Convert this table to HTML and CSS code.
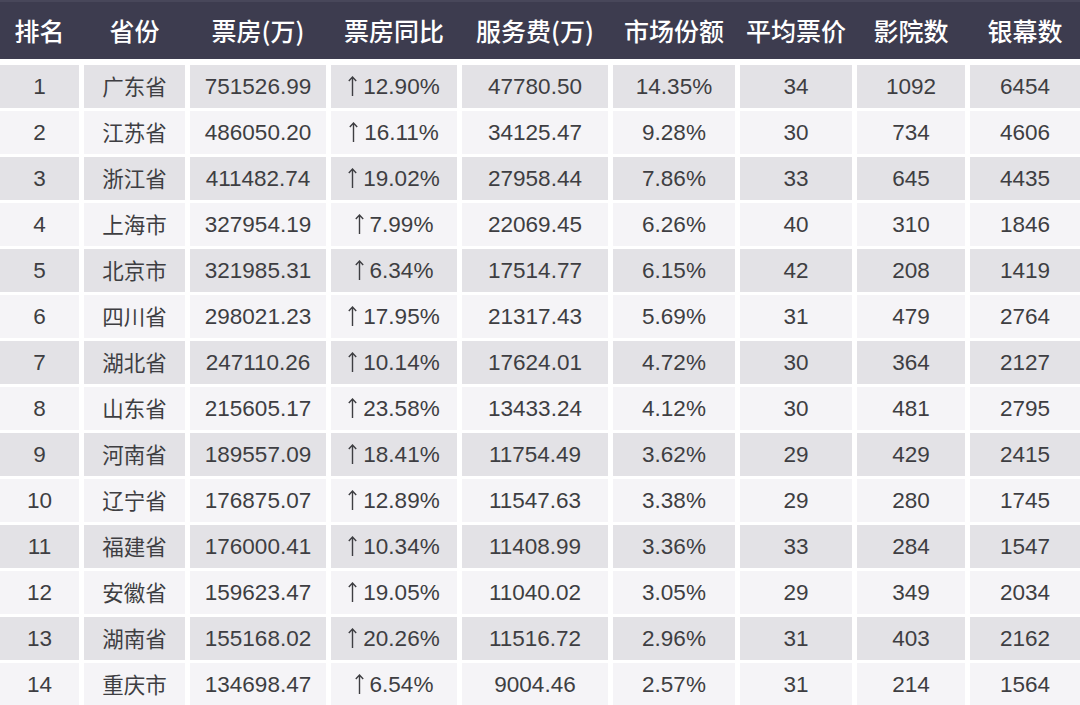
FILE: index.html
```html
<!DOCTYPE html>
<html lang="zh">
<head>
<meta charset="utf-8">
<link rel="stylesheet" href="styles.css">
</head>
<body>
<div class="table">
  <div class="row head">
    <div>排名</div><div>省份</div><div>票房(万)</div><div>票房同比</div><div>服务费(万)</div><div>市场份额</div><div>平均票价</div><div>影院数</div><div>银幕数</div>
  </div>
  <div class="row odd"><div>1</div><div class="prov">广东省</div><div>751526.99</div><div><svg class="up" viewBox="0 0 9 20"><path d="M4.5 1V20M0.8 5L4.5 1L8.2 5"/></svg>12.90%</div><div>47780.50</div><div>14.35%</div><div>34</div><div>1092</div><div>6454</div></div>
  <div class="row even"><div>2</div><div class="prov">江苏省</div><div>486050.20</div><div><svg class="up" viewBox="0 0 9 20"><path d="M4.5 1V20M0.8 5L4.5 1L8.2 5"/></svg>16.11%</div><div>34125.47</div><div>9.28%</div><div>30</div><div>734</div><div>4606</div></div>
  <div class="row odd"><div>3</div><div class="prov">浙江省</div><div>411482.74</div><div><svg class="up" viewBox="0 0 9 20"><path d="M4.5 1V20M0.8 5L4.5 1L8.2 5"/></svg>19.02%</div><div>27958.44</div><div>7.86%</div><div>33</div><div>645</div><div>4435</div></div>
  <div class="row even"><div>4</div><div class="prov">上海市</div><div>327954.19</div><div><svg class="up" viewBox="0 0 9 20"><path d="M4.5 1V20M0.8 5L4.5 1L8.2 5"/></svg>7.99%</div><div>22069.45</div><div>6.26%</div><div>40</div><div>310</div><div>1846</div></div>
  <div class="row odd"><div>5</div><div class="prov">北京市</div><div>321985.31</div><div><svg class="up" viewBox="0 0 9 20"><path d="M4.5 1V20M0.8 5L4.5 1L8.2 5"/></svg>6.34%</div><div>17514.77</div><div>6.15%</div><div>42</div><div>208</div><div>1419</div></div>
  <div class="row even"><div>6</div><div class="prov">四川省</div><div>298021.23</div><div><svg class="up" viewBox="0 0 9 20"><path d="M4.5 1V20M0.8 5L4.5 1L8.2 5"/></svg>17.95%</div><div>21317.43</div><div>5.69%</div><div>31</div><div>479</div><div>2764</div></div>
  <div class="row odd"><div>7</div><div class="prov">湖北省</div><div>247110.26</div><div><svg class="up" viewBox="0 0 9 20"><path d="M4.5 1V20M0.8 5L4.5 1L8.2 5"/></svg>10.14%</div><div>17624.01</div><div>4.72%</div><div>30</div><div>364</div><div>2127</div></div>
  <div class="row even"><div>8</div><div class="prov">山东省</div><div>215605.17</div><div><svg class="up" viewBox="0 0 9 20"><path d="M4.5 1V20M0.8 5L4.5 1L8.2 5"/></svg>23.58%</div><div>13433.24</div><div>4.12%</div><div>30</div><div>481</div><div>2795</div></div>
  <div class="row odd"><div>9</div><div class="prov">河南省</div><div>189557.09</div><div><svg class="up" viewBox="0 0 9 20"><path d="M4.5 1V20M0.8 5L4.5 1L8.2 5"/></svg>18.41%</div><div>11754.49</div><div>3.62%</div><div>29</div><div>429</div><div>2415</div></div>
  <div class="row even"><div>10</div><div class="prov">辽宁省</div><div>176875.07</div><div><svg class="up" viewBox="0 0 9 20"><path d="M4.5 1V20M0.8 5L4.5 1L8.2 5"/></svg>12.89%</div><div>11547.63</div><div>3.38%</div><div>29</div><div>280</div><div>1745</div></div>
  <div class="row odd"><div>11</div><div class="prov">福建省</div><div>176000.41</div><div><svg class="up" viewBox="0 0 9 20"><path d="M4.5 1V20M0.8 5L4.5 1L8.2 5"/></svg>10.34%</div><div>11408.99</div><div>3.36%</div><div>33</div><div>284</div><div>1547</div></div>
  <div class="row even"><div>12</div><div class="prov">安徽省</div><div>159623.47</div><div><svg class="up" viewBox="0 0 9 20"><path d="M4.5 1V20M0.8 5L4.5 1L8.2 5"/></svg>19.05%</div><div>11040.02</div><div>3.05%</div><div>29</div><div>349</div><div>2034</div></div>
  <div class="row odd"><div>13</div><div class="prov">湖南省</div><div>155168.02</div><div><svg class="up" viewBox="0 0 9 20"><path d="M4.5 1V20M0.8 5L4.5 1L8.2 5"/></svg>20.26%</div><div>11516.72</div><div>2.96%</div><div>31</div><div>403</div><div>2162</div></div>
  <div class="row even"><div>14</div><div class="prov">重庆市</div><div>134698.47</div><div><svg class="up" viewBox="0 0 9 20"><path d="M4.5 1V20M0.8 5L4.5 1L8.2 5"/></svg>6.54%</div><div>9004.46</div><div>2.57%</div><div>31</div><div>214</div><div>1564</div></div>
</div>
</body>
</html>
```
FILE: styles.css
```css
html, body {
  margin: 0;
  padding: 0;
  background: #ffffff;
}
body {
  width: 1080px;
  height: 705px;
  overflow: hidden;
  font-family: "Liberation Sans", "Noto Sans CJK SC", sans-serif;
}
.table {
  display: flex;
  flex-direction: column;
  gap: 3px;
}
.row {
  display: grid;
  grid-template-columns: 79px 101px 136px 126px 146px 122px 112px 108px 110px;
  column-gap: 5px;
  height: 43px;
}
.row > div {
  display: flex;
  align-items: center;
  justify-content: center;
  font-size: 22.5px;
  color: #3e3e42;
}
.row > .prov {
  font-family: "Noto Sans CJK SC", sans-serif;
  font-size: 21.5px;
  padding-bottom: 2px;
  box-sizing: border-box;
}
.row.odd > div {
  background: #e3e2e6;
}
.row.even > div {
  background: #f5f4f7;
}
.row.head {
  height: 59px;
  margin-bottom: 3px;
  background: #3d3c4f;
  border-top: 2px solid #48475a;
  box-sizing: border-box;
}
.row.head > div {
  color: #ffffff;
  font-size: 25px;
  font-family: "Noto Sans CJK SC", sans-serif;
  font-weight: 500;
  padding-bottom: 2px;
}
.up {
  width: 9px;
  height: 20px;
  margin-right: 6px;
  margin-bottom: 1px;
  fill: none;
  stroke: #3e3e42;
  stroke-width: 1.4;
}
```
